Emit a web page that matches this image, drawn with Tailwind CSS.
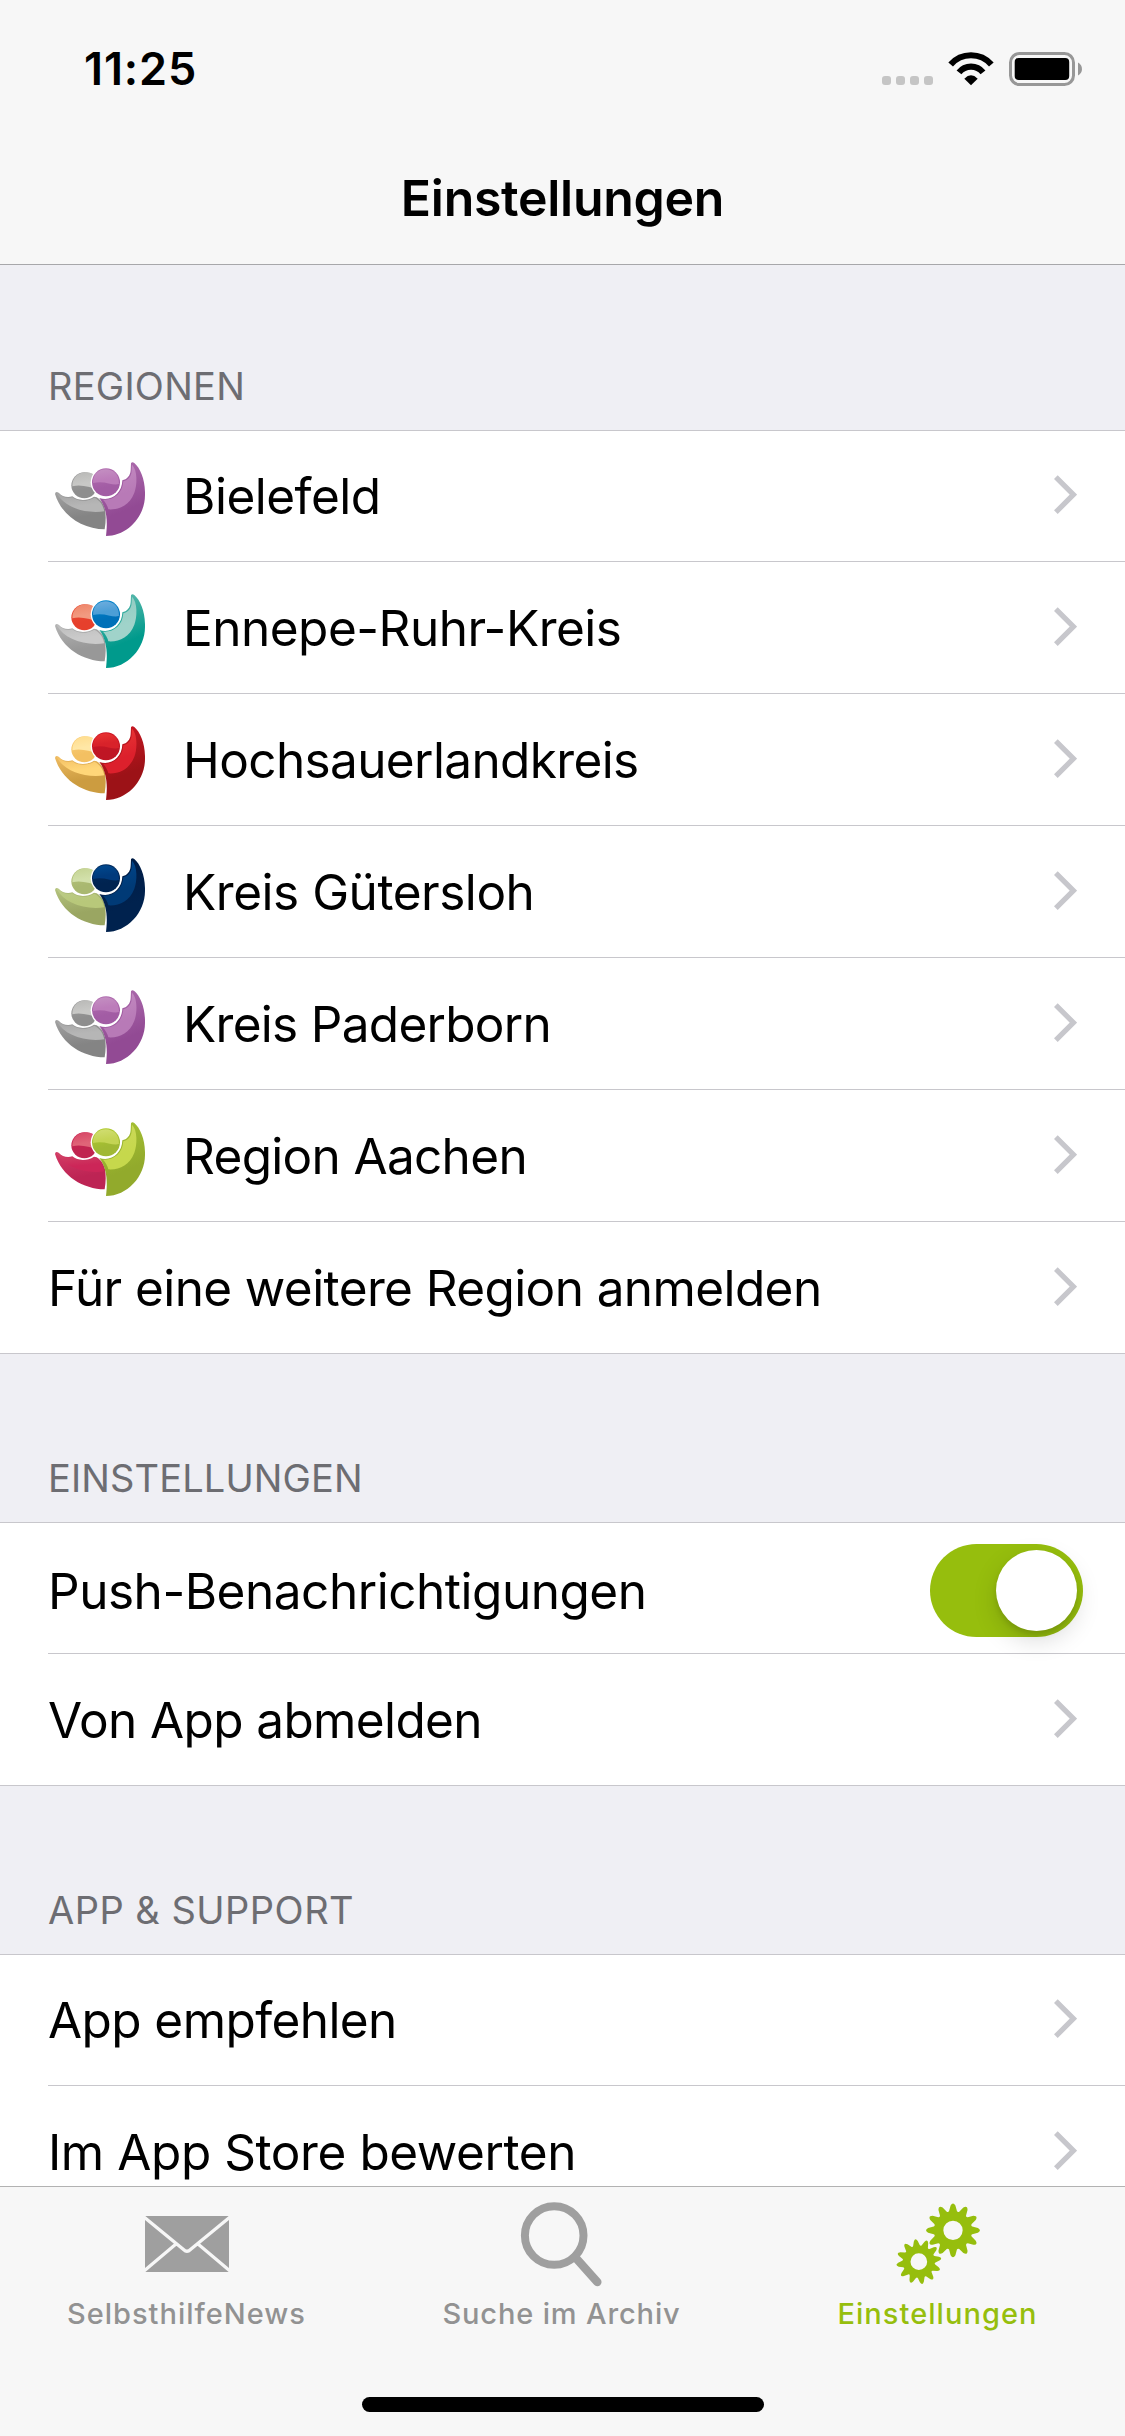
<!DOCTYPE html>
<html lang="de">
<head>
<meta charset="utf-8">
<title>Einstellungen</title>
<script src="https://cdn.jsdelivr.net/npm/@tailwindcss/browser@4"></script>
</head>
<body class="w-[1125px] h-[2436px] overflow-hidden flex flex-col bg-[#efeff4] font-['Inter',sans-serif] text-black text-[49.5px] leading-[60px]">
<svg class="hidden">
  <symbol id="chevron" viewBox="0 0 23 40"><path d="M1.85 2.1 19.4 19.65 1.85 37.2" fill="none" stroke="#c7c7cc" stroke-width="5.2"/></symbol>
</svg>

<header class="h-[265px] shrink-0 bg-[#f7f7f7] border-b border-[#a7a7aa] flex flex-col">
  <div class="h-[132px] flex justify-between pt-[39px] pl-[84px] pr-[43px]">
    <span class="text-[45px] font-semibold tracking-[0.9px]">11:25</span>
    <div class="flex pt-[13px]">
      <div class="flex gap-[5px] pt-6 mr-[15px]">
        <i class="size-[9px] rounded-[3px] bg-[#c5c5c5]"></i><i class="size-[9px] rounded-[3px] bg-[#c5c5c5]"></i><i class="size-[9px] rounded-[3px] bg-[#c5c5c5]"></i><i class="size-[9px] rounded-[3px] bg-[#c5c5c5]"></i>
      </div>
      <svg class="w-[46px] h-[34px] mr-[15px]" viewBox="264 66 138 102">
        <path d="M272 103.500A81 81 0 0 1 394 103.500" fill="none" stroke="#000" stroke-width="18.500"/>
        <path d="M297 127A46 46 0 0 1 369 127" fill="none" stroke="#000" stroke-width="18.500"/>
        <path d="M313 146Q333 126 353 146L333 165.500Z"/>
      </svg>
      <svg class="w-[73px] h-[34px]" viewBox="0 0 73 34">
        <rect x="1.500" y="1.500" width="63" height="31" rx="9" fill="none" stroke="#979797" stroke-width="3"/>
        <rect x="5.700" y="6" width="54.500" height="22" rx="4"/>
        <path d="M69 10.500C74.300 13 74.300 21 69 23.500Z" fill="#979797"/>
      </svg>
    </div>
  </div>
  <h1 class="text-center font-semibold text-[50px] tracking-[-0.28px] pt-[36px]">Einstellungen</h1>
</header>

<main class="h-[1921px] shrink-0 overflow-hidden">
  <section>
    <h2 class="h-[165px] pl-12 pt-[98px] text-[38px] leading-[46px] tracking-[0.25px] text-[#6d6d72]">REGIONEN</h2>
    <ul class="bg-white border-y border-[#c8c7cc]">
      <li class="h-[131px] pl-12"><div class="h-full flex items-center pr-12 border-b border-[#c8c7cc]"><span class="w-[135px] pl-[7px]" data-logo="0"></span><span class="flex-1 tracking-[-0.5px]">Bielefeld</span><svg class="w-[23px] h-10 mb-[2px]"><use href="#chevron"/></svg></div></li>
      <li class="h-[132px] pl-12"><div class="h-full flex items-center pr-12 border-b border-[#c8c7cc]"><span class="w-[135px] pl-[7px]" data-logo="1"></span><span class="flex-1 tracking-[-0.5px]">Ennepe-Ruhr-Kreis</span><svg class="w-[23px] h-10 mb-[2px]"><use href="#chevron"/></svg></div></li>
      <li class="h-[132px] pl-12"><div class="h-full flex items-center pr-12 border-b border-[#c8c7cc]"><span class="w-[135px] pl-[7px]" data-logo="2"></span><span class="flex-1 tracking-[-0.62px]">Hochsauerlandkreis</span><svg class="w-[23px] h-10 mb-[2px]"><use href="#chevron"/></svg></div></li>
      <li class="h-[132px] pl-12"><div class="h-full flex items-center pr-12 border-b border-[#c8c7cc]"><span class="w-[135px] pl-[7px]" data-logo="3"></span><span class="flex-1 tracking-[-0.47px]">Kreis Gütersloh</span><svg class="w-[23px] h-10 mb-[2px]"><use href="#chevron"/></svg></div></li>
      <li class="h-[132px] pl-12"><div class="h-full flex items-center pr-12 border-b border-[#c8c7cc]"><span class="w-[135px] pl-[7px]" data-logo="0"></span><span class="flex-1 tracking-[-0.7px]">Kreis Paderborn</span><svg class="w-[23px] h-10 mb-[2px]"><use href="#chevron"/></svg></div></li>
      <li class="h-[132px] pl-12"><div class="h-full flex items-center pr-12 border-b border-[#c8c7cc]"><span class="w-[135px] pl-[7px]" data-logo="4"></span><span class="flex-1 tracking-[-0.68px]">Region Aachen</span><svg class="w-[23px] h-10 mb-[2px]"><use href="#chevron"/></svg></div></li>
      <li class="h-[131px] flex items-center pl-12 pr-12"><span class="flex-1 tracking-[-0.6px]">Für eine weitere Region anmelden</span><svg class="w-[23px] h-10 mb-[2px]"><use href="#chevron"/></svg></li>
    </ul>
  </section>
  <section>
    <h2 class="h-[168px] pl-12 pt-[101px] text-[38px] leading-[46px] tracking-[0.13px] text-[#6d6d72]">EINSTELLUNGEN</h2>
    <ul class="bg-white border-y border-[#c8c7cc]">
      <li class="h-[131px] pl-12"><div class="h-full flex items-center pt-[5px] pr-[42px] border-b border-[#c8c7cc]"><span class="flex-1 tracking-[-0.47px]">Push-Benachrichtigungen</span><span class="w-[153px] h-[93px] rounded-full bg-[#96be0d] flex justify-end p-[6px]"><i class="size-[81px] rounded-full bg-white shadow-[0_9px_24px_rgba(0,0,0,0.15),0_4px_5px_rgba(0,0,0,0.1)]"></i></span></div></li>
      <li class="h-[131px] flex items-center pl-12 pr-12"><span class="flex-1 tracking-[-0.62px]">Von App abmelden</span><svg class="w-[23px] h-10 mb-[2px]"><use href="#chevron"/></svg></li>
    </ul>
  </section>
  <section>
    <h2 class="h-[168px] pl-12 pt-[101px] text-[38px] leading-[46px] tracking-[0.48px] text-[#6d6d72]">APP &amp; SUPPORT</h2>
    <ul class="bg-white border-t border-[#c8c7cc]">
      <li class="h-[131px] pl-12"><div class="h-full flex items-center pr-12 border-b border-[#c8c7cc]"><span class="flex-1 tracking-[-0.58px]">App empfehlen</span><svg class="w-[23px] h-10 mb-[2px]"><use href="#chevron"/></svg></div></li>
      <li class="h-[132px] flex items-center pl-12 pr-12"><span class="flex-1 tracking-[-0.43px]">Im App Store bewerten</span><svg class="w-[23px] h-10 mb-[2px]"><use href="#chevron"/></svg></li>
    </ul>
  </section>
</main>

<nav class="h-[250px] shrink-0 bg-[#f7f7f7] border-t border-[#b2b2b2] flex flex-col items-center">
  <div class="w-full h-[210px] grid grid-cols-[373px_377px_375px] justify-items-center text-[29px] leading-9 font-medium text-[#929292]">
    <div class="flex flex-col items-center">
      <svg class="w-[84px] h-[109px]" viewBox="0 -29 84 109">
        <path fill="#9f9f9f" d="M0 0H84V56H0Z"/>
        <path d="M-1 1 38.500 33.500Q42 37 45.500 33.500L85 1M31 28-1 55M53 28 85 55" fill="none" stroke="#f7f7f7" stroke-width="3.200"/>
      </svg>
      <span class="tracking-[1px]">SelbsthilfeNews</span>
    </div>
    <div class="flex flex-col items-center">
      <svg class="w-[82px] h-[109px]" viewBox="520 2187 82 109">
        <circle cx="554.200" cy="2235.500" r="29.300" fill="none" stroke="#9f9f9f" stroke-width="8"/>
        <path d="M575 2257 597.300 2282" stroke="#9f9f9f" stroke-width="8.500" stroke-linecap="round"/>
      </svg>
      <span class="tracking-[0.86px]">Suche im Archiv</span>
    </div>
    <div class="flex flex-col items-center text-[#96be0d]">
      <svg class="w-[84px] h-[109px]" viewBox="45 -9 252 327" id="gears" fill="currentColor"></svg>
      <span class="tracking-[1.05px]">Einstellungen</span>
    </div>
  </div>
  <div class="w-[402px] h-[15px] rounded-full bg-black"></div>
</nav>

<script>
// Colours per region: left body, left highlight, left head, right body, right highlight, right head (each top, bottom)
const palettes = [
  { lb:['#a2a2a2','#848484'], lh:['#a4a4a4','#b6b6b6'], ld:['#a0a0a0','#8e8e8e'], ldh:['#b8b8b6','#c8c8c6'], rb:['#b070b0','#924a94'], rh:['#c48cc2','#b87ab7'], rd:['#b470b2','#a25ca4'], rdh:['#c490c2','#bc7cba'] },
  { lb:['#b4b4b4','#989898'], lh:['#bcbcbc','#cacaca'], ld:['#ea5038','#e6402c'], ldh:['#ee8468','#f29a80'], rb:['#6abeb2','#009a8c'], rh:['#8ccac0','#a0d3ca'], rd:['#0088d0','#0070b8'], rdh:['#70aede','#4c9ed6'] },
  { lb:['#eebb62','#cc9c40'], lh:['#f2bf64','#ffd678'], ld:['#fbd07a','#f3c062'], ldh:['#ffdc8c','#ffe7a6'], rb:['#d01824','#9c1217'], rh:['#ea3a36','#dc202c'], rd:['#d41424','#bf1624'], rdh:['#ea3432','#d8222a'] },
  { lb:['#b4c37e','#9aa662'], lh:['#bccb88','#b8c87a'], ld:['#b8c67e','#a9b870'], ldh:['#c4d392','#d2e0aa'], rb:['#001a42','#00224e'], rh:['#004890','#003a76'], rd:['#002c60','#002350'], rdh:['#004a90','#003a7c'] },
  { lb:['#d43a66','#bd2454'], lh:['#d04868','#cc2658'], ld:['#cc2452','#c02450'], ldh:['#d64464','#e06478'], rb:['#a8c434','#92aa2c'], rh:['#ccd95c','#c6d84c'], rd:['#b2ce2c','#a0b834'], rdh:['#d2de74','#c4d454'] }
];
document.querySelectorAll('[data-logo]').forEach((el, n) => {
  const p = palettes[el.dataset.logo];
  const grads = Object.entries(p).map(([k, [a, b]]) =>
    `<linearGradient id="${k}${n}" x1="0" y1="0" x2=".25" y2="1"><stop stop-color="${a}"/><stop offset=".75" stop-color="${b}"/></linearGradient>`).join('');
  const f = k => `fill="url(#${k}${n})"`;
  el.innerHTML = `<svg class="w-[90px] h-[74px] mt-[6px]" viewBox="45 66 270 222"><defs>${grads}</defs>
    <path ${f('lb')} d="M45 162Q46 153 56 158C67 170 82 174 97 169C112 182 140 184 162 170L170 172C186 182 192 195 195 208C198 225 198 245 194 268C130 267 66 230 45 162Z"/>
    <path ${f('lh')} d="M50 160Q53 158 58 161C68 172 82 177 97 172C112 185 142 186 163 173C182 182 190 198 193 214C130 222 72 200 50 160Z"/>
    <circle ${f('ld')} cx="133" cy="136" r="39"/>
    <path ${f('ldh')} d="M97 139C96 92 155 88 166 110L170 146C148 144 128 132 97 139Z"/>
    <circle cx="198" cy="127" r="46" fill="#fff"/>
    <path ${f('rb')} d="M273 70Q276 64 283 69C302 86 316 120 315 165C315 230 262 288 198 288C201 260 206 212 178 174C212 186 246 162 247 121C260 118 271 108 272 90Z"/>
    <path ${f('rh')} d="M276 74C293 90 292 135 283 158C268 196 238 210 205 208C203 197 196 187 189 179C220 182 248 160 250 124C264 120 274 110 275 92Z"/>
    <circle ${f('rd')} cx="198" cy="127" r="42"/>
    <path ${f('rdh')} d="M159 129C157 74 239 74 237 131C222 140 195 120 159 129Z"/>
  </svg>`;
});

// Twelve-toothed gear outline with rounded tips and a round hole
function gear(cx, cy, outer, body, hole, turn) {
  const P = (r, deg) => { const a = (deg + turn) * Math.PI / 180; return (cx + r * Math.cos(a)).toFixed(1) + ' ' + (cy + r * Math.sin(a)).toFixed(1); };
  let d = '';
  for (let i = 0; i < 12; i++) {
    const a = i * 30;
    d += `${i ? 'L' : 'M'}${P(body + 2, a - 11.5)}L${P(outer - 6, a - 5.5)}Q${P(outer + 6, a)} ${P(outer - 6, a + 5.5)}L${P(body + 2, a + 11.5)}Q${P(body - 2, a + 15)} ${P(body + 2, a + 18.5)}`;
  }
  return d + `ZM${cx - hole} ${cy}a${hole} ${hole} 0 1 0 ${2 * hole} 0a${hole} ${hole} 0 1 0 ${-2 * hole} 0Z`;
}
document.getElementById('gears').innerHTML =
  `<path fill-rule="evenodd" d="${gear(216, 121, 81, 57, 29, 0)}"/><path fill-rule="evenodd" d="${gear(113.500, 215, 68, 48, 25, -8.500)}"/>`;
</script>
</body>
</html>
